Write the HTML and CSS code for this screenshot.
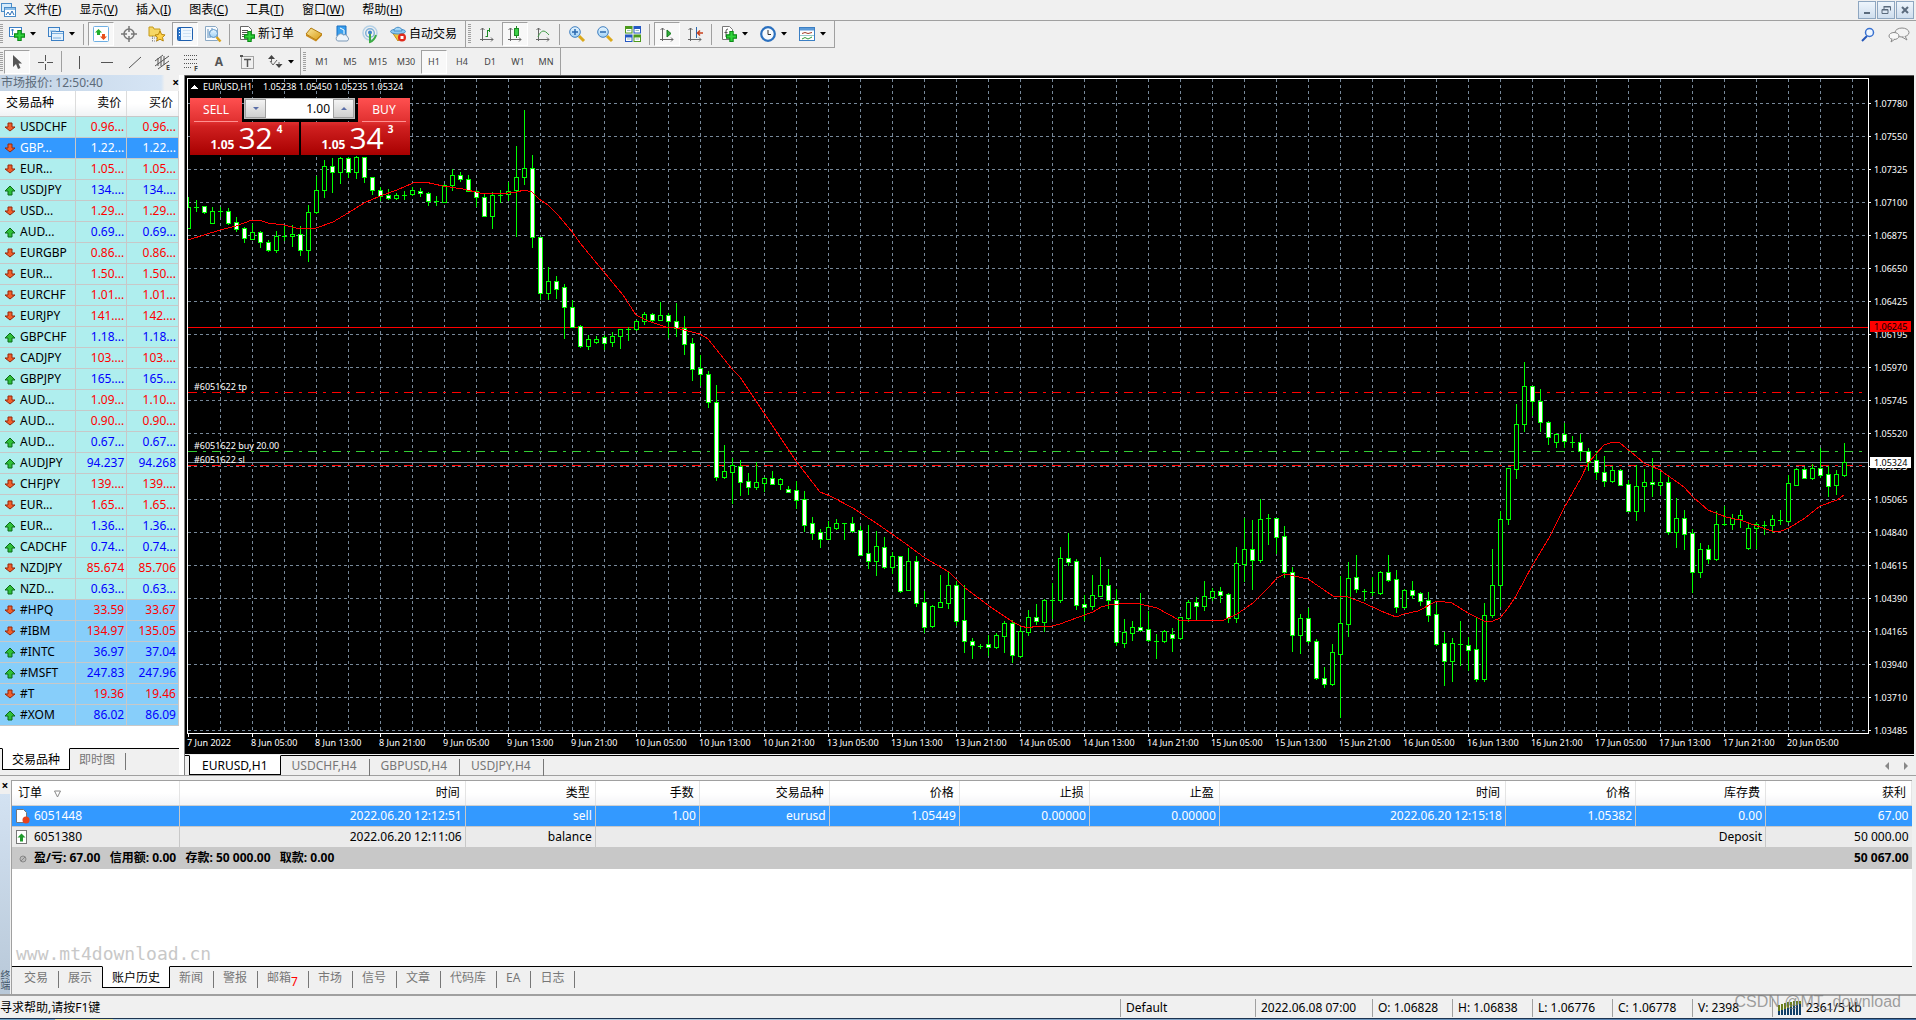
FILE: index.html
```html
<!DOCTYPE html>
<html lang="zh-CN">

<head>
  <meta charset="utf-8">
  <meta name="viewport" content="width=device-width, initial-scale=1.0">
  <title>EURUSD,H1</title>
  <link rel="stylesheet" href="styles.css">
</head>

<body>
  <svg class="defs" aria-hidden="true">
    <linearGradient id="gold" x1="0" y1="0" x2="1" y2="1"><stop offset="0" stop-color="#fbe9a0"/><stop offset="1" stop-color="#d89a10"/></linearGradient>
    <linearGradient id="lens" x1="0" y1="0" x2="0" y2="1"><stop offset="0" stop-color="#e8f6ff"/><stop offset="1" stop-color="#9fd0f5"/></linearGradient>
    <symbol id="up" viewBox="0 0 12 12"><path d="M6 2 L11 7 H8 V11 H4 V7 H1 Z" fill="#2fbf3a" stroke="#0b6b16"/></symbol>
    <symbol id="down" viewBox="0 0 12 12"><path d="M6 10 L11 6 H8 V2 H4 V6 H1 Z" fill="#f0602c" stroke="#97260a"/></symbol>
    <symbol id="plus" viewBox="0 0 10 10"><path d="M3.500 .5h3v3h3v3h-3v3h-3v-3h-3v-3h3z" fill="#2fd43a" stroke="#0c8a18"/></symbol>
    <symbol id="axes" viewBox="0 0 16 16"><path d="M3.500 15V2M1.500 4l2-2 2 2M1 13.500h13M12 11.500l2 2-2 2" fill="none" stroke="#666"/></symbol>
    <symbol id="caret" viewBox="0 0 6 4"><path d="M0 0h6L3 3.500z" fill="#000"/></symbol>
  </svg>

  <header>
    <nav class="menu-bar">
      <svg class="icon" viewBox="0 0 16 16"><rect x="1.500" y="1.500" width="10" height="8" fill="#d6ebfb" stroke="#4a8cc8"/><rect x="4.500" y="5.500" width="11" height="9" fill="#fff" stroke="#4a8cc8"/><path d="M5 6h10v2H5z" fill="#8fc0ea"/><path d="M6 13l2-3 2 3 2-4 2 4" fill="none" stroke="#2a6fb8"/></svg>
      <a href="#">文件(<u>F</u>)</a>
      <a href="#">显示(<u>V</u>)</a>
      <a href="#">插入(<u>I</u>)</a>
      <a href="#">图表(<u>C</u>)</a>
      <a href="#">工具(<u>T</u>)</a>
      <a href="#">窗口(<u>W</u>)</a>
      <a href="#">帮助(<u>H</u>)</a>
      <div class="window-buttons">
        <button type="button" aria-label="最小化"><svg viewBox="0 0 10 10"><path d="M2 8h6" stroke="#5b6b7d" stroke-width="2"/></svg></button>
        <button type="button" aria-label="还原"><svg viewBox="0 0 10 10"><path d="M3 1.500h6.500v4M1 4.500h6v4H1zM3 1v3M1 5h6M3 2h6" fill="none" stroke="#5b6b7d"/></svg></button>
        <button type="button" aria-label="关闭"><svg viewBox="0 0 10 10"><path d="M2 2l6 6M8 2L2 8" stroke="#5b6b7d" stroke-width="2"/></svg></button>
      </div>
    </nav>

    <div class="toolbar">
      <div class="group">
        <span class="handle"></span>
        <button type="button" class="tool drop" title="新图表"><svg class="icon" viewBox="0 0 16 16"><rect x=".5" y="1.500" width="12" height="9" fill="#fff" stroke="#3b7fc4"/><path d="M3.500 3v6M2 4h3M6 8.500h4" stroke="#3b7fc4"/><use href="#plus" x="5" y="4" width="11" height="11"/></svg><svg class="caret"><use href="#caret"/></svg></button>
        <button type="button" class="tool drop" title="配置文件"><svg class="icon" viewBox="0 0 16 16"><rect x=".5" y="1.500" width="11" height="9" fill="#e4f1fc" stroke="#3b7fc4"/><rect x="3.500" y="5.500" width="12" height="9" fill="#e4f1fc" stroke="#3b7fc4"/><path d="M2 5h6M5 12h8M4 7.500h11" stroke="#7ab0de"/></svg><svg class="caret"><use href="#caret"/></svg></button>
        <span class="sep"></span>
        <button type="button" class="tool pressed" title="市场报价"><svg class="icon" viewBox="0 0 16 16"><rect x=".5" y=".5" width="15" height="15" rx="1" fill="#fff" stroke="#6fb0e4"/><path d="M5.500 3l3.500 3.500H7V9H4V6.500H2z" fill="#1fae2c"/><path d="M10.500 14L14 10.500h-2V8H9v2.500H7z" fill="#e8501c"/></svg></button>
        <button type="button" class="tool" title="数据窗口"><svg class="icon" viewBox="0 0 16 16"><circle cx="8" cy="8" r="5" fill="none" stroke="#777" stroke-width="1.500"/><path d="M8 0v6M8 10v6M0 8h6M10 8h6" stroke="#777" stroke-width="1.500"/></svg></button>
        <button type="button" class="tool" title="导航"><svg class="icon" viewBox="0 0 16 16"><path d="M0 1h4l1 2h6v7H0z" fill="#f6d766" stroke="#c49a1a"/><path d="M3 12h5M3 15h5M3.500 10v6" stroke="#888" stroke-dasharray="1 1"/><path d="M11 5l1.700 3.500 3.300.4-2.500 2.500.8 3.600-3.300-1.800L7.700 15l.8-3.600L6 9l3.400-.5z" fill="#ffd24a" stroke="#b8860b"/></svg></button>
        <button type="button" class="tool pressed" title="终端"><svg class="icon" viewBox="0 0 16 16"><rect x=".5" y="1.500" width="15" height="13" rx="1" fill="#eef7ff" stroke="#1e5fae"/><path d="M1 2h3v12H1z" fill="#2f78cc"/><path d="M6 4.500h8M6 7.500h8M6 10.500h8" stroke="#cfe2f4"/><path d="M2.500 3v9" stroke="#fff" stroke-dasharray="1 2"/></svg></button>
        <button type="button" class="tool" title="策略测试"><svg class="icon" viewBox="0 0 16 16"><path d="M.5.5h10l2 2v12H.5z" fill="#f8fbfe" stroke="#8aa8c4"/><path d="M3 3v9M5 5v7M7 2v6" stroke="#5a8cba"/><circle cx="8.500" cy="7.500" r="4" fill="url(#lens)" stroke="#5b94c8"/><path d="M11.500 11l4 4.500" stroke="#d8a21c" stroke-width="2.500"/></svg></button>
        <span class="sep"></span>
        <button type="button" class="tool text"><svg class="icon" viewBox="0 0 16 16"><path d="M1.500.5h8l3 3v10h-11z" fill="#fff" stroke="#666"/><path d="M3 4.500h6M3 6.500h7M3 8.500h5M3 10.500h3" stroke="#555"/><use href="#plus" x="5" y="5" width="11" height="11"/></svg>新订单</button>
        <button type="button" class="tool" title="MetaEditor"><svg class="icon" viewBox="0 0 16 16"><path d="M5 2l11 6-6 6L0 8z" fill="url(#gold)" stroke="#b07a10"/><path d="M0 8v2l10 5.500 6-6V8l-6 6z" fill="#c98a1a"/></svg></button>
        <button type="button" class="tool" title="VPS"><svg class="icon" viewBox="0 0 16 16"><path d="M3 0h9v10H3z" fill="#39a0ee" stroke="#1b6fc0"/><path d="M6 2l4 2v4" fill="none" stroke="#fff"/><path d="M3.500 15a3 3 0 010-5 3.500 3.500 0 016-1 3 3 0 014 2 2.200 2.200 0 01-.5 4z" fill="#eef4fa" stroke="#7d9ab8"/></svg></button>
        <button type="button" class="tool" title="信号"><svg class="icon" viewBox="0 0 16 16"><circle cx="8" cy="7" r="7" fill="none" stroke="#b5d1e6" stroke-width="1.500"/><circle cx="8" cy="7" r="4.300" fill="none" stroke="#7fb0d8" stroke-width="1.500"/><circle cx="8" cy="6.500" r="2" fill="#3b86c6"/><path d="M8 8v8c4-1 5-4 6-7" fill="none" stroke="#3cab44" stroke-width="2"/></svg></button>
        <button type="button" class="tool text"><svg class="icon" viewBox="0 0 16 16"><path d="M2 6l6 9 6-8z" fill="#f3c53b" stroke="#c1901a"/><ellipse cx="8" cy="5.500" rx="7.500" ry="2.500" fill="#8cc8f0" stroke="#4a90c8"/><path d="M4 5c0-5 8-5 8 0z" fill="#a4d6f6" stroke="#4a90c8"/><circle cx="12" cy="11.500" r="4" fill="#e02a1c"/><path d="M10.500 10h3v3h-3z" fill="#fff"/></svg>自动交易</button>
      </div>
      <div class="group">
        <span class="handle"></span>
        <button type="button" class="tool" title="柱状图"><svg class="icon" viewBox="0 0 16 16"><use href="#axes"/><path d="M8.500 4v7M6.500 10.500h2M8.500 4.500h2M10.500 2v4" stroke="#1d8a24" fill="none"/></svg></button>
        <button type="button" class="tool pressed" title="阴阳烛"><svg class="icon" viewBox="0 0 16 16"><use href="#axes"/><path d="M9.500 0v12" stroke="#1d8a24"/><rect x="7.500" y="2.500" width="4" height="7" fill="#3ccf46" stroke="#1d8a24"/></svg></button>
        <button type="button" class="tool" title="折线图"><svg class="icon" viewBox="0 0 16 16"><use href="#axes"/><path d="M3 11c3-7 6-8 11-2" stroke="#3f9a45" fill="none"/></svg></button>
        <span class="sep"></span>
        <button type="button" class="tool" title="放大"><svg class="icon" viewBox="0 0 16 16"><path d="M10 10l5 5" stroke="#dba91c" stroke-width="3"/><circle cx="6" cy="6" r="5.300" fill="url(#lens)" stroke="#3f7fc0"/><path d="M6 3v6M3 6h6" stroke="#2a68ae" stroke-width="1.500"/></svg></button>
        <button type="button" class="tool" title="缩小"><svg class="icon" viewBox="0 0 16 16"><path d="M10 10l5 5" stroke="#dba91c" stroke-width="3"/><circle cx="6" cy="6" r="5.300" fill="url(#lens)" stroke="#3f7fc0"/><path d="M3 6h6" stroke="#2a68ae" stroke-width="1.500"/></svg></button>
        <button type="button" class="tool" title="平铺窗口"><svg class="icon" viewBox="0 0 16 16"><path d="M0 0h7.500v7.500H0zM8.500 8.500H16V16H8.500z" fill="#4c9a1c"/><path d="M8.500 0H16v7.500H8.500zM0 8.500h7.500V16H0z" fill="#2458c4"/><path d="M1 3h5.500v3.500H1zM9.500 3H15v3.500H9.500zM1 11.500h5.500V15H1zM9.500 11.500H15V15H9.500z" fill="#fff"/><path d="M2 4.500h3.500M10.500 4.500H14M2 13h3.500M10.500 13H14" stroke="#9bb"/></svg></button>
        <span class="sep"></span>
        <button type="button" class="tool pressed" title="自动滚动"><svg class="icon" viewBox="0 0 16 16"><use href="#axes"/><path d="M8 4l4 3.500L8 11z" fill="#2fae38" stroke="#157a1e"/></svg></button>
        <button type="button" class="tool" title="图表平移"><svg class="icon" viewBox="0 0 16 16"><use href="#axes"/><path d="M9.500 1v11" stroke="#2b68ae"/><path d="M16 7h-5M13 4.500L10.500 7l2.500 2.500" stroke="#c8401c" stroke-width="1.500" fill="none"/></svg></button>
        <span class="sep"></span>
        <button type="button" class="tool drop" title="指标"><svg class="icon" viewBox="0 0 16 16"><path d="M1.500.5h7l3 3v10h-10z" fill="#fff" stroke="#777"/><path d="M5 11V5q0-2 2-2M3.500 6.500h3" fill="none" stroke="#555"/><use href="#plus" x="5" y="5" width="11" height="11"/></svg><svg class="caret"><use href="#caret"/></svg></button>
        <button type="button" class="tool drop" title="周期"><svg class="icon" viewBox="0 0 16 16"><circle cx="8" cy="8" r="6.800" fill="#f6fafd" stroke="#2a70bf" stroke-width="2.200"/><path d="M8 4v4.500h3" fill="none" stroke="#333"/></svg><svg class="caret"><use href="#caret"/></svg></button>
        <button type="button" class="tool drop" title="模板"><svg class="icon" viewBox="0 0 16 16"><rect x=".5" y="1.500" width="15" height="13" fill="#fff" stroke="#3b7fc4"/><path d="M1 2h14v2.500H1z" fill="#5c9bd8"/><path d="M3 7.500l3-1 3 1 4-1" stroke="#a03c28" fill="none"/><path d="M1 9.500h14" stroke="#9cc"/><path d="M3 13l3-1.500 3 1.500 4-2" stroke="#2f9a38" fill="none"/></svg><svg class="caret"><use href="#caret"/></svg></button>
      </div>
      <div class="right-tools">
        <button type="button" class="tool" title="搜索"><svg class="icon" viewBox="0 0 16 16"><path d="M7 9l-5 5" stroke="#2456b8" stroke-width="2"/><circle cx="9.500" cy="5.500" r="4" fill="#eef6ff" stroke="#3a72d0" stroke-width="1.500"/></svg></button>
        <button type="button" class="tool chat" title="聊天"><svg viewBox="0 0 22 16"><ellipse cx="14" cy="5.500" rx="7" ry="4.500" fill="#f3f3f3" stroke="#8a8a8a"/><path d="M17 9l2 4-5-3" fill="#f3f3f3" stroke="#8a8a8a"/><ellipse cx="6" cy="9" rx="5" ry="3.500" fill="#f8f8f8" stroke="#8a8a8a"/><path d="M4 12l-1 3 4-3" fill="#f8f8f8" stroke="#8a8a8a"/></svg></button>
      </div>
    </div>

    <div class="toolbar">
      <div class="group">
        <span class="handle"></span>
        <button type="button" class="tool pressed" title="光标"><svg class="icon" viewBox="0 0 16 16"><path d="M4 1v12l3-3 2 5 2.500-1-2-4.500H13z" fill="#555"/></svg></button>
        <button type="button" class="tool" title="十字线"><svg class="icon" viewBox="0 0 16 16"><path d="M8.500 1v6M8.500 10v6M1 8.500h6M10 8.500h6" stroke="#555"/></svg></button>
        <span class="sep"></span>
        <button type="button" class="tool" title="垂直线"><svg class="icon" viewBox="0 0 16 16"><path d="M8.500 2v13" stroke="#555"/></svg></button>
        <button type="button" class="tool" title="水平线"><svg class="icon" viewBox="0 0 16 16"><path d="M2 8.500h12" stroke="#555"/></svg></button>
        <button type="button" class="tool" title="趋势线"><svg class="icon" viewBox="0 0 16 16"><path d="M2 14L14 3" stroke="#555"/></svg></button>
        <button type="button" class="tool" title="等距通道"><svg class="icon" viewBox="0 0 16 16"><path d="M0 12L14 2M0 7l8-6M3 15L14 7M3 4v8M6 3v9M9 2v9" fill="none" stroke="#555"/><text x="11" y="16" class="glyph">E</text></svg></button>
        <button type="button" class="tool" title="斐波纳契"><svg class="icon" viewBox="0 0 16 16"><path d="M1 1.500h14M1 5.500h14M1 9.500h14M1 13.500h8" stroke="#555" stroke-dasharray="1 1"/><text x="11" y="17" class="glyph">F</text></svg></button>
        <button type="button" class="tool letter" title="文字">A</button>
        <button type="button" class="tool" title="文字标签"><svg class="icon" viewBox="0 0 16 16"><rect x="2.500" y="2.500" width="12" height="12" fill="none" stroke="#555" stroke-dasharray="1 1"/><path d="M1 1h3v2H1z" fill="#555"/><path d="M5 5.500h7M8.500 5v8" stroke="#555" stroke-width="1.500"/></svg></button>
        <button type="button" class="tool drop" title="箭头"><svg class="icon" viewBox="0 0 16 16"><path d="M4.500 1L8 5H1zM12 14l-3.500-4h7z" fill="#444"/><path d="M3 7l3 4 4-5M4.500 5v3M12 8v3" fill="none" stroke="#666"/></svg><svg class="caret"><use href="#caret"/></svg></button>
      </div>
      <div class="group">
        <span class="handle"></span>
        <button type="button" class="tool period">M1</button>
        <button type="button" class="tool period">M5</button>
        <button type="button" class="tool period">M15</button>
        <button type="button" class="tool period">M30</button>
        <button type="button" class="tool period pressed">H1</button>
        <button type="button" class="tool period">H4</button>
        <button type="button" class="tool period">D1</button>
        <button type="button" class="tool period">W1</button>
        <button type="button" class="tool period">MN</button>
      </div>
    </div>
  </header>

  <main>
    <aside class="market">
      <div class="panel-title"><span>市场报价: 12:50:40</span><button type="button" class="close" aria-label="关闭">×</button></div>
      <table class="quotes">
        <thead>
          <tr><th class="symbol">交易品种</th><th>卖价</th><th>买价</th></tr>
        </thead>
        <tbody>
          <tr class="down"><td><svg><use href="#down"/></svg>USDCHF</td><td>0.96...</td><td>0.96...</td></tr>
          <tr class="down selected"><td><svg><use href="#down"/></svg>GBP...</td><td>1.22...</td><td>1.22...</td></tr>
          <tr class="down"><td><svg><use href="#down"/></svg>EUR...</td><td>1.05...</td><td>1.05...</td></tr>
          <tr><td><svg><use href="#up"/></svg>USDJPY</td><td>134....</td><td>134....</td></tr>
          <tr class="down"><td><svg><use href="#down"/></svg>USD...</td><td>1.29...</td><td>1.29...</td></tr>
          <tr><td><svg><use href="#up"/></svg>AUD...</td><td>0.69...</td><td>0.69...</td></tr>
          <tr class="down"><td><svg><use href="#down"/></svg>EURGBP</td><td>0.86...</td><td>0.86...</td></tr>
          <tr class="down"><td><svg><use href="#down"/></svg>EUR...</td><td>1.50...</td><td>1.50...</td></tr>
          <tr class="down"><td><svg><use href="#down"/></svg>EURCHF</td><td>1.01...</td><td>1.01...</td></tr>
          <tr class="down"><td><svg><use href="#down"/></svg>EURJPY</td><td>141....</td><td>142....</td></tr>
          <tr><td><svg><use href="#up"/></svg>GBPCHF</td><td>1.18...</td><td>1.18...</td></tr>
          <tr class="down"><td><svg><use href="#down"/></svg>CADJPY</td><td>103....</td><td>103....</td></tr>
          <tr><td><svg><use href="#up"/></svg>GBPJPY</td><td>165....</td><td>165....</td></tr>
          <tr class="down"><td><svg><use href="#down"/></svg>AUD...</td><td>1.09...</td><td>1.10...</td></tr>
          <tr class="down"><td><svg><use href="#down"/></svg>AUD...</td><td>0.90...</td><td>0.90...</td></tr>
          <tr><td><svg><use href="#up"/></svg>AUD...</td><td>0.67...</td><td>0.67...</td></tr>
          <tr><td><svg><use href="#up"/></svg>AUDJPY</td><td>94.237</td><td>94.268</td></tr>
          <tr class="down"><td><svg><use href="#down"/></svg>CHFJPY</td><td>139....</td><td>139....</td></tr>
          <tr class="down"><td><svg><use href="#down"/></svg>EUR...</td><td>1.65...</td><td>1.65...</td></tr>
          <tr><td><svg><use href="#up"/></svg>EUR...</td><td>1.36...</td><td>1.36...</td></tr>
          <tr><td><svg><use href="#up"/></svg>CADCHF</td><td>0.74...</td><td>0.74...</td></tr>
          <tr class="down"><td><svg><use href="#down"/></svg>NZDJPY</td><td>85.674</td><td>85.706</td></tr>
          <tr><td><svg><use href="#up"/></svg>NZD...</td><td>0.63...</td><td>0.63...</td></tr>
          <tr class="stock down"><td><svg><use href="#down"/></svg>#HPQ</td><td>33.59</td><td>33.67</td></tr>
          <tr class="stock down"><td><svg><use href="#down"/></svg>#IBM</td><td>134.97</td><td>135.05</td></tr>
          <tr class="stock"><td><svg><use href="#up"/></svg>#INTC</td><td>36.97</td><td>37.04</td></tr>
          <tr class="stock"><td><svg><use href="#up"/></svg>#MSFT</td><td>247.83</td><td>247.96</td></tr>
          <tr class="stock down"><td><svg><use href="#down"/></svg>#T</td><td>19.36</td><td>19.46</td></tr>
          <tr class="stock"><td><svg><use href="#up"/></svg>#XOM</td><td>86.02</td><td>86.09</td></tr>
        </tbody>
      </table>
      <div class="tabs market-tabs"><a href="#" class="active">交易品种</a><a href="#">即时图</a></div>
    </aside>

    <section class="chart-pane">
      <div class="chart" id="chart">
        <svg id="plot"></svg>
        <div class="trade-panel">
          <button type="button" class="deal sell"><span class="side">SELL</span><span class="price"><b>1.05</b><span class="big">32</span><sup>4</sup></span></button>
          <button type="button" class="deal buy"><span class="side">BUY</span><span class="price"><b>1.05</b><span class="big">34</span><sup>3</sup></span></button>
          <div class="volume">
            <button type="button" aria-label="减少"><svg viewBox="0 0 6 4"><path d="M0 0h6L3 3z" fill="#5a6ea8"/></svg></button>
            <input type="text" value="1.00" aria-label="手数">
            <button type="button" aria-label="增加"><svg viewBox="0 0 6 4"><path d="M0 3h6L3 0z" fill="#5a6ea8"/></svg></button>
          </div>
        </div>
      </div>
      <div class="tabs chart-tabs">
        <a href="#" class="active">EURUSD,H1</a><a href="#">USDCHF,H4</a><a href="#">GBPUSD,H4</a><a href="#">USDJPY,H4</a>
        <span class="scroll"><svg viewBox="0 0 4 8"><path d="M4 0v8L0 4z" fill="#888"/></svg><svg viewBox="0 0 4 8"><path d="M0 0v8l4-4z" fill="#888"/></svg></span>
      </div>
    </section>
  </main>

  <section class="terminal">
    <div class="side-title"><button type="button" class="close" aria-label="关闭">×</button><span>终端</span></div>
    <div class="terminal-body">
      <table class="orders">
        <colgroup><col class="c-order"><col><col class="c-mid"><col class="c-lot"><col class="c-mid"><col class="c-mid"><col class="c-mid"><col class="c-mid"><col><col class="c-mid"><col class="c-mid"><col class="c-profit"></colgroup>
        <thead>
          <tr><th>订单<svg class="sort" viewBox="0 0 8 8"><path d="M.5 1h6L3.500 7z" fill="none" stroke="#888"/></svg></th><th>时间</th><th>类型</th><th>手数</th><th>交易品种</th><th>价格</th><th>止损</th><th>止盈</th><th>时间</th><th>价格</th><th>库存费</th><th>获利</th></tr>
        </thead>
        <tbody>
          <tr class="selected"><td><svg viewBox="0 0 16 16"><path d="M2.500 1.500h7l3 3v10h-10z" fill="#fff" stroke="#777"/><circle cx="12" cy="12" r="3.500" fill="#e8431c"/></svg>6051448</td><td>2022.06.20 12:12:51</td><td>sell</td><td>1.00</td><td>eurusd</td><td>1.05449</td><td>0.00000</td><td>0.00000</td><td>2022.06.20 12:15:18</td><td>1.05382</td><td>0.00</td><td>67.00</td></tr>
          <tr class="balance"><td><svg viewBox="0 0 16 16"><rect x="2.500" y="1.500" width="10" height="13" fill="#fff" stroke="#777"/><path d="M7.500 4.500l4 4H9v4H6v-4H3.500z" fill="#1f9a2c"/></svg>6051380</td><td>2022.06.20 12:11:06</td><td>balance</td><td colspan="8">Deposit</td><td>50 000.00</td></tr>
          <tr class="total"><td colspan="11"><svg viewBox="0 0 16 16"><circle cx="9" cy="9" r="3" fill="#bbb" stroke="#888"/><path d="M7 11l4-4" stroke="#888"/></svg>盈/亏: 67.00&nbsp;&nbsp; 信用额: 0.00&nbsp;&nbsp; 存款: 50 000.00&nbsp;&nbsp; 取款: 0.00</td><td>50 067.00</td></tr>
        </tbody>
      </table>
      <div class="site-mark">www.mt4download.cn</div>
      <div class="tabs terminal-tabs">
        <a href="#">交易</a><a href="#" class="before">展示</a><a href="#" class="active">账户历史</a><a href="#">新闻</a><a href="#">警报</a><a href="#">邮箱<span class="badge">7</span></a><a href="#">市场</a><a href="#">信号</a><a href="#">文章</a><a href="#">代码库</a><a href="#">EA</a><a href="#">日志</a>
      </div>
    </div>
  </section>

  <footer>
    <span class="hint">寻求帮助,请按F1键</span>
    <span class="s-profile">Default</span>
    <span class="s-time">2022.06.08 07:00</span>
    <span class="s-price">O: 1.06828</span>
    <span class="s-price">H: 1.06838</span>
    <span class="s-price">L: 1.06776</span>
    <span class="s-price">C: 1.06778</span>
    <span class="s-price">V: 2398</span>
    <span class="s-net"><svg viewBox="0 0 24 14"><path d="M1 14V4M4 14V3M7 14V2M10 14V1M13 14V1M16 14V0M19 14V0M22 14V0" stroke="#6b7f1c" stroke-width="2"/><path d="M1 14V10M4 14V9M7 14V8M10 14V7M13 14V6M16 14V5M19 14V4M22 14V3" stroke="#123f66" stroke-width="2"/></svg>2361/5 kb</span>
    <span class="csdn">CSDN @MT_download</span>
  </footer>
  <div class="taskbar"></div>

  <script src="chart.js"></script>
</body>

</html>
```
FILE: styles.css
```css
* {
  box-sizing: border-box;
}

body {
  margin: 0;
  height: 100vh;
  display: flex;
  flex-direction: column;
  overflow: hidden;
  background: #f0f0f0;
  color: #000;
  font-family: "Noto Sans", "Noto Sans CJK SC", sans-serif;
  font-size: 12px;
  line-height: 16px;
}

a {
  color: inherit;
  text-decoration: none;
}

button,
input {
  font: inherit;
  color: inherit;
  margin: 0;
  padding: 0;
}

svg {
  display: block;
  flex: none;
}

.defs {
  position: absolute;
  width: 0;
  height: 0;
}

.icon {
  width: 16px;
  height: 16px;
  overflow: visible;
}

/* menu and toolbars */
.menu-bar {
  height: 21px;
  display: flex;
  align-items: center;
  border-bottom: 1px solid #a0a0a0;
}

.menu-bar a {
  margin-left: 8px;
  margin-right: 10px;
}

.window-buttons {
  margin-left: auto;
  display: flex;
  gap: 1px;
  padding-right: 2px;
}

.window-buttons button {
  width: 18px;
  height: 18px;
  display: flex;
  align-items: center;
  justify-content: center;
  border: 1px solid #8ea6c0;
  background: linear-gradient(#eef5fc, #cfdeee);
}

.window-buttons svg {
  width: 10px;
  height: 10px;
}

.toolbar {
  height: 27px;
  display: flex;
}

.group {
  display: flex;
  align-items: center;
  padding-right: 2px;
  border-right: 1px solid #a0a0a0;
  border-bottom: 1px solid #a0a0a0;
}

.toolbar + .toolbar .group {
  padding-right: 0;
  border-bottom: none;
}

.handle {
  width: 3px;
  height: 20px;
  background: repeating-linear-gradient(#a0a0a0 0 1px, #f0f0f0 1px 2px);
}

.group + .group .handle {
  margin: 0 2px;
}

.tool {
  width: 26px;
  height: 24px;
  margin: 0 1px;
  display: flex;
  align-items: center;
  justify-content: center;
  border: 1px solid transparent;
  background: none;
}

.tool.pressed {
  border-color: #a0a0a0 #fff #fff #a0a0a0;
  background: #f8f8f8;
}

.tool.drop {
  width: 37px;
  gap: 5px;
}

.tool.text {
  width: auto;
  gap: 3px;
  padding: 0 4px;
}

.tool.period {
  font-size: 9px;
  color: #444;
}

.tool.letter {
  font-weight: bold;
  color: #555;
}

.caret {
  width: 6px;
  height: 4px;
}

.glyph {
  font-size: 7px;
  font-weight: bold;
  fill: #444;
}

.sep {
  width: 1px;
  height: 21px;
  margin: 0 3px 0 2px;
  background: #a0a0a0;
}

.right-tools {
  margin-left: auto;
  display: flex;
  align-items: center;
}

.tool.chat {
  width: 32px;
}

.chat svg {
  width: 22px;
  height: 16px;
}

/* market watch */
main {
  flex: 1;
  min-height: 0;
  display: flex;
  border-bottom: 1px solid #a0a0a0;
}

.market {
  width: 185px;
  display: flex;
  flex-direction: column;
  padding-right: 5px;
  background: #fff;
  border-right: 1px solid #808080;
}

.panel-title {
  height: 16px;
  display: flex;
  justify-content: space-between;
  align-items: center;
  padding-left: 1px;
  color: #5c6b7a;
  background: linear-gradient(90deg, #c3d3e4, #d6e5f5 90%, #f0f0f0 92%);
}

.close {
  border: none;
  background: none;
  color: #000;
  font-weight: bold;
  line-height: 12px;
}

.quotes {
  width: 100%;
  table-layout: fixed;
  border-collapse: collapse;
  margin-bottom: auto;
}

.quotes th {
  height: 25px;
  padding: 0 5px 0 0;
  font-weight: normal;
  text-align: right;
  border-right: 1px solid #dcdcdc;
  border-bottom: 1px solid #c8c8c8;
  background: linear-gradient(#fff 50%, #f0f2f4);
}

.quotes th.symbol {
  width: 75px;
  padding-left: 6px;
  text-align: left;
}

.quotes td {
  height: 21px;
  padding: 0 2px 0 0;
  text-align: right;
  color: #00f;
  background: #afeeee;
  border-right: 1px solid #c8c8c8;
  border-bottom: 1px solid #c8c8c8;
}

.quotes td svg {
  display: inline-block;
  width: 12px;
  height: 12px;
  margin: 0 4px;
  vertical-align: -2px;
}

.quotes tr.down td {
  color: #f00;
}

.quotes tr td:first-child {
  padding: 0;
  text-align: left;
  color: #000;
}

.quotes tr.stock td {
  background: #87cefa;
}

.quotes tr.selected td,
.quotes tr.selected td:first-child {
  color: #fff;
  background: #3399ff;
}

/* tabs */
.tabs {
  display: flex;
  align-items: flex-start;
  border-top: 1px solid #000;
  background: #f0f0f0;
  color: #777;
}

.tabs a {
  height: 17px;
  margin-top: 4px;
  padding: 0 10px 0 9px;
  line-height: 14px;
  border-right: 1px solid #777;
}

.tabs a.active {
  height: 22px;
  margin-top: -1px;
  padding: 3px 9px 0;
  line-height: 16px;
  color: #000;
  background: #fff;
  border: 1px solid #000;
  border-top-color: #fff;
}

.tabs a.before {
  border-right: none;
}

.market-tabs {
  height: 27px;
  padding-left: 2px;
}

/* chart */
.chart-pane {
  flex: 1;
  min-width: 0;
  display: flex;
  flex-direction: column;
  padding-right: 2px;
}

.chart {
  flex: 1;
  min-height: 0;
  position: relative;
  background: #000;
  border-top: 1px solid #555;
}

#plot {
  width: 100%;
  height: 100%;
}

#plot text {
  font-size: 9px;
  fill: #fff;
}

#plot .tag {
  fill: #000;
}

.chart-tabs {
  height: 20px;
  margin-top: 1px;
  padding-left: 4px;
}

.chart-tabs a {
  margin-top: 3px;
  padding: 0 12px 0 11px;
}

.chart-tabs a.active {
  height: 20px;
  padding: 2px 12px 0;
}

.scroll {
  margin: 6px 6px 0 auto;
  display: flex;
  gap: 15px;
}

.scroll svg {
  width: 4px;
  height: 8px;
}

/* one click trading, lies over the chart */
.trade-panel {
  position: absolute;
  left: 5px;
  top: 22px;
  display: flex;
  gap: 2px;
}

.deal {
  width: 109px;
  height: 57px;
  display: flex;
  flex-direction: column;
  border: none;
  color: #fff;
  background: linear-gradient(#ff5050, #e03030 42%, #d02020 50%, #a80000);
  clip-path: polygon(0 0, 52px 0, 52px 24px, 100% 24px, 100% 100%, 0 100%);
}

.deal.buy {
  align-items: flex-end;
  clip-path: polygon(57px 0, 100% 0, 100% 100%, 0 100%, 0 24px, 57px 24px);
}

.side {
  width: 44px;
  height: 24px;
  margin: 0 4px;
  line-height: 23px;
  text-align: center;
  border-bottom: 1px solid #ff9090;
}

.price {
  height: 33px;
  width: 109px;
  display: flex;
  align-items: baseline;
  justify-content: center;
  padding-left: 4px;
  gap: 4px;
  line-height: 32px;
}

.big {
  font-family: "Open Sans", "Noto Sans", sans-serif;
  font-size: 30px;
}

.price sup {
  font-weight: bold;
  line-height: 14px;
  align-self: flex-start;
}

.volume {
  position: absolute;
  left: 54px;
  top: 0;
  width: 111px;
  height: 21px;
  display: flex;
  background: #fff;
  border: 1px solid #c0c0c0;
}

.volume button {
  width: 21px;
  display: flex;
  align-items: center;
  justify-content: center;
  border: 1px solid #a0a0a0;
  background: linear-gradient(#f4f4f4, #d0d0d0);
}

.volume button svg {
  width: 6px;
  height: 4px;
}

.volume input {
  flex: 1;
  width: 0;
  border: none;
  padding-right: 3px;
  text-align: right;
}

/* terminal */
.terminal {
  height: 216px;
  margin-top: 4px;
  display: flex;
  border-bottom: 2px solid #a0a0a0;
}

.side-title {
  width: 10px;
  margin-right: 1px;
  display: flex;
  flex-direction: column;
  justify-content: space-between;
  overflow: hidden;
  color: #44566a;
  background: linear-gradient(#f0f0f0 14px, #d3e2f2 14px, #b8c8d8);
}

.side-title span {
  width: 10px;
  margin-bottom: 4px;
  font-size: 10px;
  line-height: 10px;
  writing-mode: vertical-rl;
}

.terminal-body {
  flex: 1;
  min-width: 0;
  position: relative;
  display: flex;
  flex-direction: column;
  margin-right: 4px;
  background: #fff;
  border-top: 1px solid #a0a0a0;
  border-left: 1px solid #a0a0a0;
}

.orders {
  width: 100%;
  table-layout: fixed;
  border-collapse: collapse;
  margin-bottom: auto;
}

.c-order {
  width: 167px;
}

.c-mid {
  width: 130px;
}

.c-lot {
  width: 104px;
}

.c-profit {
  width: 146px;
}

.orders th {
  height: 24px;
  padding: 0 5px 0 0;
  font-weight: normal;
  text-align: right;
  border-right: 1px solid #e4e4e4;
  border-bottom: 1px solid #d0d0d0;
  background: linear-gradient(#fff 50%, #f3f4f6);
}

.orders th:first-child {
  padding-left: 6px;
  text-align: left;
}

.orders td {
  height: 21px;
  padding: 0 3px 0 0;
  text-align: right;
  border-right: 1px solid #c8c8c8;
  border-bottom: 1px solid #c8c8c8;
}

.orders tr td:first-child {
  text-align: left;
}

.orders tr td:last-child {
  border-right: none;
}

.orders svg {
  display: inline-block;
  width: 16px;
  height: 16px;
  margin: 0 4px 0 2px;
  vertical-align: -4px;
}

.orders svg.sort {
  width: 8px;
  height: 8px;
  margin-left: 12px;
  vertical-align: -1px;
}

.orders .selected {
  color: #fff;
  background: #3399ff;
}

.orders .balance {
  background: #ebebeb;
}

.orders .total {
  background: #c8c8c8;
  font-weight: bold;
}

.orders .total td {
  border-right: none;
}

.site-mark {
  position: absolute;
  left: 4px;
  bottom: 30px;
  font-family: "DejaVu Sans Mono", monospace;
  font-size: 18px;
  line-height: 20px;
  color: #c8c8c8;
}

.terminal-tabs {
  height: 28px;
}

.terminal-tabs a:first-child {
  padding-left: 12px;
}

.badge {
  position: relative;
  top: 4px;
  color: #f00;
}

/* status bar */
footer {
  height: 22px;
  display: flex;
  align-items: center;
  position: relative;
  padding-top: 2px;
  white-space: nowrap;
}

footer span {
  height: 18px;
  line-height: 18px;
  padding-left: 5px;
  border-left: 1px solid #a0a0a0;
}

footer .hint {
  flex: 1;
  padding: 0;
  border: none;
}

.s-profile {
  width: 135px;
}

.s-time {
  width: 117px;
}

.s-price {
  width: 80px;
}

.s-net {
  width: 144px;
  display: flex;
  align-items: center;
  gap: 4px;
}

.s-net svg {
  width: 24px;
  height: 14px;
}

footer .csdn {
  position: absolute;
  right: 15px;
  top: -3px;
  border: none;
  font-family: "Liberation Sans", sans-serif;
  font-size: 16px;
  color: rgba(120, 120, 120, 0.7);
}

.taskbar {
  height: 2px;
  border-top: 1px solid #1c3350;
  background: linear-gradient(90deg, #6fa3c4 55px, #ece9a0 55px 113px, #b8d4e6 113px 500px, #3d6fa6);
}
```
FILE: chart.js
```js
// one row per hour bar: high, body top, body bottom, low, 1 = bull / 0 = bear
const bars = [
  [197,207,228,228,1],[200,207,207,211,1],[206,206,212,213,0],[207,211,223,223,1],[207,211,211,216,1],[208,211,223,224,0],[217,222,229,231,0],[227,228,238,242,0],
  [224,232,239,239,1],[231,232,242,247,0],[240,242,250,251,0],[231,236,250,252,1],[226,236,236,240,1],[225,234,236,246,1],[226,234,250,255,0],[205,212,250,261,1],
  [176,190,212,213,1],[160,166,190,197,1],[158,166,172,192,0],[157,158,172,183,1],[157,158,172,177,0],[156,157,172,178,1],[157,157,177,182,0],[177,177,190,194,0],
  [187,190,196,200,0],[189,195,198,199,0],[193,195,198,199,1],[191,195,195,199,1],[187,190,194,195,1],[188,191,193,196,0],[192,193,201,205,0],[196,201,201,205,0],
  [184,185,202,202,1],[169,175,185,190,1],[172,175,179,181,0],[175,179,191,191,0],[190,191,197,206,0],[194,197,216,216,0],[192,195,216,228,1],[190,195,195,202,1],
  [182,191,194,200,1],[146,177,190,236,1],[110,168,177,184,1],[155,168,237,247,0],[237,237,293,299,0],[267,281,293,299,1],[276,281,289,298,0],[284,287,307,338,0],
  [300,307,327,327,0],[325,326,346,347,0],[335,339,346,349,1],[336,339,342,343,1],[335,337,343,349,0],[332,336,342,346,1],[329,329,336,348,1],[327,329,329,340,0],
  [320,321,329,330,1],[312,314,321,324,1],[313,314,320,322,0],[302,315,320,320,1],[313,315,321,337,0],[303,321,328,336,0],[316,328,344,354,0],[338,343,369,380,0],
  [355,368,374,385,0],[371,374,402,407,0],[385,402,477,480,0],[445,471,477,478,1],[458,465,472,503,1],[460,466,482,495,0],[473,481,487,494,0],[462,482,487,489,1],
  [477,478,483,491,1],[471,478,484,484,0],[478,479,484,489,1],[486,489,492,492,0],[481,490,500,508,0],[491,499,525,531,0],[517,523,533,539,0],[529,532,539,547,0],
  [521,527,539,539,1],[519,523,528,529,1],[523,523,523,539,0],[517,523,531,532,0],[526,530,555,555,0],[525,553,561,568,0],[531,546,561,575,1],[537,547,567,568,0],
  [552,556,567,573,1],[556,556,591,592,0],[548,561,590,590,1],[556,561,603,606,0],[591,602,627,632,0],[605,606,626,627,1],[575,602,607,607,1],[571,585,603,608,1],
  [581,585,621,625,0],[585,620,641,652,0],[638,641,645,658,0],[644,646,646,648,0],[635,644,647,655,0],[633,635,647,648,1],[621,623,636,652,1],[620,623,655,662,0],
  [627,631,656,657,1],[610,617,632,635,1],[604,617,621,624,0],[599,600,622,631,1],[583,600,600,618,1],[547,558,600,602,1],[533,558,562,565,0],[559,561,605,609,0],
  [595,604,607,620,0],[575,595,606,609,1],[557,585,596,596,1],[569,585,600,608,0],[589,600,642,645,0],[619,632,643,647,1],[621,627,633,640,1],[593,627,630,631,0],
  [611,629,640,641,0],[634,641,641,658,0],[630,631,641,642,1],[628,634,638,651,0],[617,617,638,639,1],[600,602,618,621,1],[597,602,606,619,0],[581,596,606,610,1],
  [588,591,597,600,1],[587,591,595,602,0],[593,594,618,622,0],[547,563,618,622,1],[518,549,564,581,1],[520,549,560,589,0],[499,519,560,562,1],[514,518,518,544,1],
  [518,518,537,553,0],[526,536,572,577,0],[567,572,635,651,0],[614,618,635,653,1],[608,618,641,643,0],[639,641,678,679,0],[667,678,684,687,0],[644,652,684,685,1],
  [576,623,654,717,1],[562,578,624,636,1],[555,577,589,592,0],[589,591,591,600,0],[577,592,592,595,0],[571,572,593,594,1],[555,572,580,581,0],[570,579,607,612,0],
  [589,590,607,608,1],[581,590,595,598,0],[592,593,601,605,0],[592,600,615,621,0],[604,614,644,645,0],[632,643,661,685,0],[638,643,661,681,1],[621,644,644,665,0],
  [637,645,650,670,0],[618,649,679,681,0],[603,615,679,681,1],[549,585,615,617,1],[511,519,585,606,1],[468,468,519,524,1],[404,424,469,478,1],[362,386,424,431,1],
  [386,386,401,415,0],[389,401,422,431,0],[421,422,437,444,0],[433,434,442,447,1],[423,434,441,447,0],[436,442,442,447,0],[434,442,451,460,0],[448,451,462,470,0],
  [451,460,472,479,0],[456,472,481,486,0],[466,470,481,482,1],[469,470,485,485,0],[480,484,511,511,0],[465,486,511,520,1],[469,482,486,511,1],[458,482,484,496,0],
  [472,482,485,494,1],[477,482,532,534,0],[498,518,532,547,1],[510,518,534,549,0],[529,533,572,592,0],[543,549,572,577,1],[545,549,559,563,0],[511,524,559,560,1],
  [506,524,524,525,0],[514,518,524,529,1],[510,515,519,527,1],[522,528,548,549,1],[522,524,528,548,1],[521,525,525,534,0],[515,519,525,532,1],[510,520,520,524,1],
  [475,483,521,522,1],[468,469,485,485,1],[467,469,478,478,0],[464,468,478,479,1],[448,468,475,477,0],[466,474,486,496,0],[470,474,485,494,1],[443,462,475,476,1]
];

const average = "188,240 204,235 220,230 236,226 244,223 252,220 262,221 268,223 284,225 300,229 316,228 333,222 348,213 364,203 380,196 397,190 413,183 419,182 425,182 443,186 463,189 480,193 487,193 508,193 517,192 524,190 532,192 539,199 548,205 558,215 573,233 580,243 604,272 623,295 636,315 648,321 666,327 676,328 692,332 700,334 708,339 732,369 740,377 782,440 796,461 820,492 830,496 853,508 876,523 892,534 909,546 925,558 949,572 964,587 989,606 1013,622 1021,626 1028,628 1037,626 1052,626 1060,624 1068,621 1093,612 1101,607 1109,605 1129,603 1140,604 1157,608 1179,620 1205,620 1212,621 1224,620 1237,614 1253,603 1269,587 1277,578 1285,574 1308,579 1333,596 1348,597 1364,603 1381,611 1396,617 1404,614 1418,611 1437,601 1452,603 1468,613 1484,621 1493,621 1500,618 1508,608 1516,596 1532,566 1549,538 1564,508 1581,478 1588,463 1596,454 1604,445 1613,442 1620,443 1637,457 1644,463 1660,470 1684,487 1693,497 1708,510 1726,517 1740,520 1757,526 1772,531 1781,531 1789,528 1805,518 1820,506 1837,500 1844,495";

const prices = ["1.07780", "1.07550", "1.07325", "1.07100", "1.06875", "1.06650", "1.06425", "1.06195", "1.05970", "1.05745",
  "1.05520", "1.05295", "1.05065", "1.04840", "1.04615", "1.04390", "1.04165", "1.03940", "1.03710", "1.03485"];

const times = ["7 Jun 2022"];
for (const day of [8, 9, 10, 13, 14, 15, 16, 17]) {
  times.push(day + " Jun 05:00", day + " Jun 13:00", day + " Jun 21:00");
}
times.push("20 Jun 05:00");

const left = 185;
const top_ = 76;
const bottom = 733;
const plot = document.getElementById("plot");

function line(x1, y1, x2, y2, color, dash) {
  return `<path d="M${x1} ${y1}L${x2} ${y2}" stroke="${color}" fill="none"${dash ? ` stroke-dasharray="${dash}"` : ""}/>`;
}

function text(x, y, value, cls) {
  return `<text x="${x}" y="${y}"${cls ? ` class="${cls}"` : ""}>${value}</text>`;
}

function draw() {
  const w = plot.clientWidth;
  const h = plot.clientHeight;
  const right = left + w - 46;
  let out = "";

  // grid
  for (let x = 220; x < right; x += 32) out += line(x + 0.5, 79, x + 0.5, bottom, "#778899", "3 3");
  for (let i = 0; i < prices.length; i++) {
    const y = 103 + i * 33;
    out += line(188, y + 0.5, right, y + 0.5, "#778899", "3 3");
    out += line(right, y + 0.5, right + 3, y + 0.5, "#fff");
    out += text(right + 6, y + 4, prices[i]);
  }

  // levels
  out += line(188, 327.5, right, 327.5, "#f00");
  out += line(188, 392.5, right, 392.5, "#f00", "9 6 3 6");
  out += line(188, 451.5, right, 451.5, "#32cd32", "9 6 3 6");
  out += line(188, 465.5, right, 465.5, "#f00", "9 6 3 6");
  out += line(188, 462.5, right, 462.5, "#778899");

  // candles
  bars.forEach((b, i) => {
    const x = 188 + i * 8;
    out += line(x + 0.5, b[0], x + 0.5, b[3] + 1, "#0f0");
    if (b[1] === b[2]) {
      out += line(x - 2, b[1] + 0.5, x + 3, b[1] + 0.5, "#0f0");
    } else {
      out += `<rect x="${x - 1.5}" y="${b[1] + 0.5}" width="4" height="${b[2] - b[1]}" fill="${b[4] ? "#000" : "#fff"}" stroke="#0f0"/>`;
    }
  });
  out += `<polyline points="${average}" fill="none" stroke="#f00"/>`;

  // frame and labels
  out += `<rect x="${left}" y="${top_}" width="2" height="${h}" fill="#000"/>`;
  out += `<path d="M187.500 ${bottom + 0.5}V78.500H${right + 0.5}V${bottom + 0.5}Z" fill="none" stroke="#fff"/>`;
  times.forEach((t, i) => {
    const x = 188 + i * 64;
    out += line(x + 0.5, bottom, x + 0.5, bottom + 4, "#fff");
    out += text(x - 1, 746, t);
  });
  out += text(194, 390, "#6051622 tp") + text(194, 449, "#6051622 buy 20.00") + text(194, 463, "#6051622 sl");
  out += `<path d="M191 89h7l-3.500-4z" fill="#fff"/>`;
  out += text(203, 90, "EURUSD,H1") + text(263, 90, "1.05238 1.05450 1.05235 1.05324");
  out += `<rect x="${right + 2}" y="321" width="41" height="11" fill="#f00"/>` + text(right + 6, 330, "1.06245", "tag");
  out += `<rect x="${right + 2}" y="457" width="41" height="11" fill="#fff"/>` + text(right + 6, 466, "1.05324", "tag");

  plot.setAttribute("viewBox", `${left} ${top_} ${w} ${h}`);
  plot.setAttribute("shape-rendering", "crispEdges");
  plot.innerHTML = out;
}

draw();
window.addEventListener("resize", draw);
```
